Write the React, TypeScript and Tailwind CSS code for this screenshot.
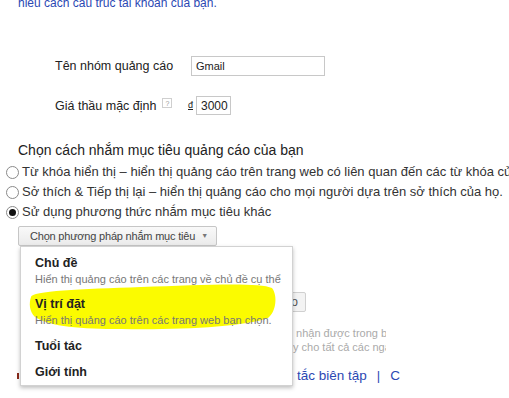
import React from "react";

function Radio({ checked }: { checked?: boolean }) {
  return (
    <span className="flex h-[13px] w-[13px] shrink-0 items-center justify-center rounded-full border border-[#8a8a8a] bg-white">
      {checked && <span className="h-[7px] w-[7px] rounded-full bg-[#111]" />}
    </span>
  );
}

function Highlight() {
  return (
    <svg
      className="absolute left-0 top-0"
      width="273"
      height="138"
      viewBox="0 0 273 138"
    >
      <path
        d="M10,50 C10,44 60,42 120,40 C180,38 238,35 251,41 C257,49 255,65 247,71 C222,80 160,83 100,82 C60,82 30,80 14,70 C8,64 8,56 10,50 Z"
        fill="#fbfb00"
      />
    </svg>
  );
}

const options = [
  { title: "Chủ đề", desc: "Hiển thị quảng cáo trên các trang về chủ đề cụ thể" },
  { title: "Vị trí đặt", desc: "Hiển thị quảng cáo trên các trang web bạn chọn." },
  { title: "Tuổi tác" },
  { title: "Giới tính" },
];

export default function App() {
  return (
    <div className="relative h-[398px] w-[509px] overflow-hidden bg-white font-['Liberation_Sans',Arial,sans-serif] text-[#222]">
      <p className="mt-[-5px] whitespace-nowrap pl-[18px] text-[12px] leading-[16px] text-[#2b48b3]">
        hiểu cách cấu trúc tài khoản của bạn.
      </p>

      <div className="mt-[45px] pl-[55px]">
        <div className="flex h-[20px] items-center">
          <span className="w-[136px] whitespace-nowrap text-[12.5px] leading-[16px]">Tên nhóm quảng cáo</span>
          <div className="flex h-[20px] w-[134px] items-center border border-[#c8c8c8] px-[4px] text-[11px]">
            Gmail
          </div>
        </div>
        <div className="mt-[20px] flex h-[19px] items-center">
          <div className="flex w-[133px] items-center gap-[6px]">
            <span className="whitespace-nowrap text-[12.5px] leading-[16px]">Giá thầu mặc định</span>
            <span className="mb-[5px] flex h-[10px] w-[10px] items-center justify-center border border-[#cfcfcf] text-[7px] leading-none text-[#999]">
              ?
            </span>
          </div>
          <span className="w-[4px] text-[9px] leading-none underline">đ</span>
          <div className="ml-[4px] flex h-[19px] w-[35px] items-center border border-[#c8c8c8] px-[4px] text-[12px]">
            3000
          </div>
        </div>
      </div>

      <h2 className="mt-[25px] whitespace-nowrap pl-[18px] text-[14px] leading-[20px] text-[#222]">
        Chọn cách nhắm mục tiêu quảng cáo của bạn
      </h2>

      <div className="mt-[2px] pl-[6px] text-[13px] leading-[20px] text-[#333]">
        <div className="flex items-center gap-[3px] whitespace-nowrap">
          <Radio />
          <span>Từ khóa hiển thị – hiển thị quảng cáo trên trang web có liên quan đến các từ khóa của bạn</span>
        </div>
        <div className="flex items-center gap-[3px] whitespace-nowrap">
          <Radio />
          <span>Sở thích &amp; Tiếp thị lại – hiển thị quảng cáo cho mọi người dựa trên sở thích của họ.</span>
        </div>
        <div className="flex items-center gap-[3px] whitespace-nowrap">
          <Radio checked />
          <span>Sử dụng phương thức nhắm mục tiêu khác</span>
        </div>
      </div>

      <div className="ml-[18px] mt-[4px] flex h-[20px] w-[199px] items-center gap-[6px] whitespace-nowrap rounded-[2px] border border-[#c6c6c6] bg-gradient-to-b from-[#f9f9f9] to-[#ebebeb] pl-[11px] text-[11px] tracking-[-0.2px] text-[#444]">
        <span>Chọn phương pháp nhắm mục tiêu</span>
        <span className="text-[7px] text-[#777]">▼</span>
      </div>

      {/* content under the open menu */}
      <div className="ml-[280px] mt-[46px] flex h-[20px] w-[26px] items-center justify-end rounded-[2px] border border-[#d0d0d0] bg-[#f3f3f3] pr-[7px] text-[12px] text-[#555]">
        o
      </div>
      <div className="ml-[293px] mt-[14px] w-[93px] overflow-hidden whitespace-nowrap text-[11px] leading-[14px] text-[#aaa]">
        <p>&nbsp;nhận được trong bất kỳ</p>
        <p>y cho tất cả các ngày</p>
      </div>
      <div className="mt-[12px] flex items-center">
        <span className="ml-[17px] h-[6px] w-[2px] bg-[#8a2a1a]" />
        <span className="ml-[278px] whitespace-nowrap text-[13.5px] leading-[16px] text-[#2b48b3]">
          tắc biên tập
        </span>
        <span className="ml-[10px] text-[13px] text-[#2b48b3]">|</span>
        <span className="ml-[10px] text-[13.5px] text-[#2b48b3]">C</span>
      </div>

      <div className="absolute left-[20px] top-[246px] w-[273px] border border-[#d2d2d2] bg-white pt-[4px] shadow-[0_2px_4px_rgba(0,0,0,0.25)]">
        <Highlight />
        {options.map((o) => (
          <div key={o.title} className={`relative pl-[14px] ${o.desc ? "py-[4px]" : "py-[5px]"}`}>
            <p className="text-[12.5px] font-bold leading-[16px] text-[#222]">{o.title}</p>
            {o.desc && <p className="whitespace-nowrap text-[11px] leading-[17px] text-[#777]">{o.desc}</p>}
          </div>
        ))}
      </div>
    </div>
  );
}
